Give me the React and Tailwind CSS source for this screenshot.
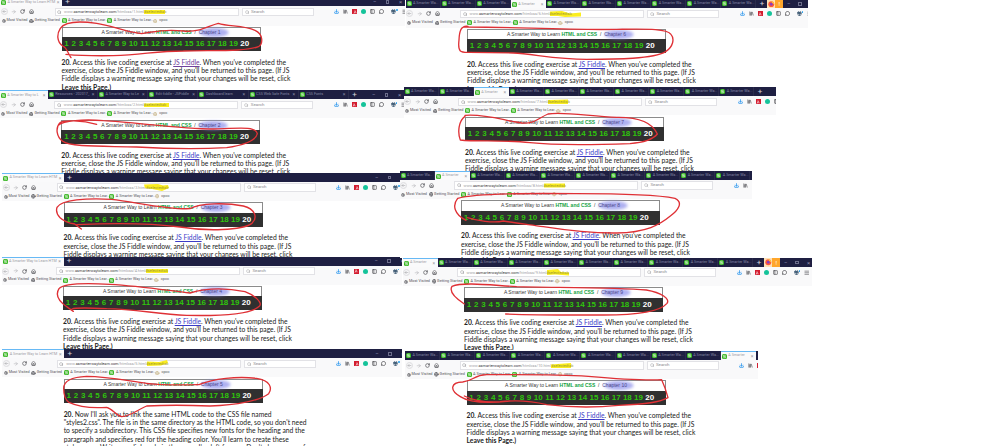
import React from "react";
import { ArrowLeft, ArrowRight, RotateCw, House, Search, Download, Library, PanelLeft, MessageCircle, Gift, Menu, Settings, Globe } from "lucide-react";

const DEFAULT_BODY = [
  "Access this live coding exercise at ",
  "exercise, close the JS Fiddle window, and you'll be returned to this page. (If JS",
  "Fiddle displays a warning message saying that your changes will be reset, click",
];

const STYLES_BODY = [
  "Now I'll ask you to link the same HTML code to the CSS file named",
  "\"styles2.css\". The file is in the same directory as the HTML code, so you don't need",
  "to specify a subdirectory. This CSS file specifies new fonts for the heading and the",
  "paragraph and specifies red for the heading color. You'll learn to create these",
  "styles soon. Write your link code in the space I've left for you. Don't change any of",
];

const many = (active) => ({ kind: "many", active });

// bottom: lower edge of the tab strip; end: lower edge of the visible window
const windows = [
  { n: 1, x: 0, bottom: 6.3, end: 92, w: 405, tabs: { kind: "single" }, visited: true },
  { n: 3, x: -0.2, bottom: 99.3, end: 173, w: 405, tabs: { kind: "mixed" }, chapter: 2 },
  { n: 5, x: 2, bottom: 182, end: 258, w: 399.5, tabs: { kind: "single" }, chapter: 3 },
  { n: 7, x: 1.5, bottom: 265.6, end: 350, w: 400, tabs: { kind: "single" }, chapter: 4 },
  { n: 9, x: 2.2, bottom: 358.3, end: 446, w: 400, tabs: { kind: "single" }, chapter: 5, body: STYLES_BODY },
  { n: 2, x: 405.5, bottom: 8.3, end: 88, w: 402, tabs: many(3), chapter: 6, extras: true },
  { n: 4, x: 403.5, bottom: 96.3, end: 171, w: 372, tabs: many(2), chapter: 7 },
  { n: 6, x: 399.5, bottom: 180, end: 258, w: 352.3, tabs: many(1), chapter: 8 },
  { n: 8, x: 402.5, bottom: 267, end: 350, w: 409, tabs: many(0), chapter: 9, extras: true },
  { n: 10, x: 405, bottom: 360, end: 446, w: 352.7, tabs: many(9), chapter: 10 },
];

// Highlighter swipe over the end of each address, by chapter
const swipes = {
  1: "M0 2H21V6H0Z",
  2: "M0 2.500L25 2V6H0Z",
  3: "M-2 .5L12 0L17 1.500L22 1L23 4L16 7L6 5L-1 4Z",
  4: "M0 2H22V6H0Z",
  5: "M1 1.500L13 2L21 0L22 3L15 5.500L1 6Z",
  6: "M0 1.500L12 1L20 3.500L31 2.500V6.500L15 7L8 6H0Z",
  7: "M0 2L20 1.500V6H0Z",
  8: "M0 1.500H21V5.500H0Z",
  9: "M0 1L11 0L14 3L22 3.500V6.500L8 5.500L0 6Z",
  10: "M0 2.500L20 1V6H0Z",
};

function Mark({ className = "" }) {
  return (
    <svg viewBox="0 0 10 10" className={"size-[5px] shrink-0 " + className}>
      <rect width="10" height="10" rx="3" fill="#35b51f" />
      <path d="M7.5 2.5H3.8Q2.3 2.5 2.3 3.8T3.8 5H6.2Q7.7 5 7.7 6.2T6.2 7.5H2.4" fill="none" stroke="#fff" strokeWidth="1.2" />
    </svg>
  );
}

function Tab({ width, label, active, close }) {
  return (
    <div
      style={{ width }}
      className={
        "flex h-full shrink-0 items-center gap-[1.5px] pl-[1px] pr-[2.5px] text-[3.7px] " +
        (active ? "border-t border-[#67b9f5] bg-[#fafafb] text-[#9b9ba3]" : "border-r border-[#2b2c4c] text-[#8587a3]")
      }
    >
      <Mark />
      <span className="flex-1">{label}</span>
      {close && <span className="text-[5px] leading-none">×</span>}
    </div>
  );
}

function TabStrip({ win }) {
  const { kind, active } = win.tabs;
  return (
    <div className="flex h-[9px] w-[420px] shrink-0 items-center bg-[#1e1f42] whitespace-nowrap text-[#a9aac0]">
      {kind === "single" && <Tab width={62} label="A Smarter Way to Learn HTM" active close />}
      {kind === "mixed" && (
        <>
          <Tab width={48} label="A Smarter Way to L" active close />
          {["Resources - 202017_", "A Smarter Way to Le", "Edit fiddle - JSFiddle", "Dashboard learn", "CSS Web Safe Fonts", "CSS Fonts"].map((t) => (
            <Tab key={t} width={50.2} label={t} close />
          ))}
        </>
      )}
      {kind === "many" &&
        Array.from({ length: 10 }, (_, i) => (
          <Tab key={i} width={35.1} label={i === active ? "A Smarter" : "A Smarter Wa..."} active={i === active} close={i === active} />
        ))}
      <span className="w-[11px] shrink-0 text-center text-[8px] leading-none text-white/80">+</span>
      {win.extras && (
        <div className="flex h-full items-center">
          <div className="flex h-full w-[8px] items-center justify-center bg-[#ffe1b5]">
            <svg viewBox="0 0 12 12" className="size-[6.5px]">
              <circle cx="6" cy="6" r="5.5" fill="#ff5a36" />
              <path d="M6 .5A5.5 5.5 0 0 1 11.5 6L8 4Z" fill="#ffc83d" />
              <circle cx="6" cy="6" r="2.6" fill="#8a3fc0" />
            </svg>
          </div>
          <div className="flex h-full w-[7.5px] items-center justify-center bg-[#ffa62b] text-[6px] leading-none text-white">!</div>
        </div>
      )}
      {kind === "single" && <div className="w-[300px]" />}
      <div className={"flex items-center text-[6px] leading-none text-[#8f90aa] " + (win.extras ? "gap-[8px] pl-[4px]" : kind === "single" ? "gap-[9.5px]" : "gap-[9.5px] pl-[12px]")}>
        <span>−</span>
        <span className="size-[3.5px] border border-[#6c6d8b]" />
        <span>×</span>
      </div>
    </div>
  );
}

function Toolbar({ n }) {
  return (
    <div className="flex h-[11px] w-[412px] shrink-0 items-center text-[#4a4a4f]">
      <div className="flex w-[54.5px] shrink-0 items-center pl-[0.5px]">
        <div className="flex size-[7px] items-center justify-center rounded-full border-[0.5px] border-[#dddde0]">
          <ArrowLeft size={5} color="#88888c" className="shrink-0" />
        </div>
        <ArrowRight size={5.5} color="#a5a5aa" className="ml-[3.5px]" />
        <RotateCw size={5} strokeWidth={3} className="ml-[3.5px]" />
        <House size={5} strokeWidth={3} className="ml-[4px]" />
      </div>
      <div className="flex h-[8.6px] w-[184px] shrink-0 items-center border-[0.5px] border-[#e2e2e6] bg-white pl-[1.5px] text-[3.85px] whitespace-nowrap text-[#a0a0a4]">
        <Search size={4.5} color="#77777c" className="mr-[2.5px]" />
        <span>www.</span>
        <span className="text-[#3b3b40]">asmarterwaytolearn.com</span>
        <span>/htmlcss/{n}.html</span>
        <span className="relative text-[#a09a30]">
          <svg className="absolute top-[-1px] left-0 h-[8px] w-[32px] overflow-visible" viewBox="0 0 32 8">
            <path d={swipes[n]} fill="#fbed1f" />
          </svg>
          <span className="relative">#selectedtab</span>
        </span>
      </div>
      <div className="ml-[3px] flex h-[8.6px] w-[72px] shrink-0 items-center gap-[2px] border-[0.5px] border-[#e2e2e6] bg-white pl-[2px] text-[4.4px] text-[#8b8b90]">
        <Search size={4.5} />
        Search
      </div>
      <div className="ml-[20.5px] flex items-center gap-[4px]">
        <Download size={5} strokeWidth={3.5} color="#2292ed" />
        <Library size={5} strokeWidth={3} />
        <div className="flex size-[5px] items-center justify-center bg-[#d31c2f]">
          <svg viewBox="0 0 10 10" className="size-[4px]">
            <path d="M2 8Q6 6 5 1.500Q5 5 8.500 7Q5 6 2 8" fill="none" stroke="#fff" strokeWidth="1.200" />
          </svg>
        </div>
        <div className="size-[5px] rounded-full bg-[#15c39a]" />
        <PanelLeft size={5} strokeWidth={3} />
        <MessageCircle size={5} strokeWidth={3.5} />
        <div className="flex items-start pl-[3px]">
          <Gift size={5} strokeWidth={3.5} color="#38566f" />
          <div className="size-[1.5px] rounded-full bg-[#1f9bea]" />
        </div>
        <Menu size={5.5} strokeWidth={2.5} />
      </div>
    </div>
  );
}

function Bookmarks() {
  return (
    <div className="flex h-[7px] w-[412px] shrink-0 items-center pl-[1.5px] text-[3.75px] whitespace-nowrap text-[#55555a]">
      <Settings size={4} strokeWidth={3.5} className="mr-[1px] shrink-0" />
      <span className="w-[22.5px] shrink-0">Most Visited</span>
      <Globe size={4.6} strokeWidth={3} className="mr-[1px] shrink-0" />
      <span className="w-[27px] shrink-0">Getting Started</span>
      <Mark className="mr-[1.5px]" />
      <span className="w-[39.2px] shrink-0">A Smarter Way to Lear...</span>
      <Mark className="mr-[1.5px]" />
      <span className="w-[39.2px] shrink-0">A Smarter Way to Lear...</span>
      <Globe size={4.4} color="#bda66c" className="mr-[2px] shrink-0" />
      <span>cpcc</span>
    </div>
  );
}

function ChapterBox({ chapter }) {
  return (
    <div className="w-[199px] shrink-0 font-['Liberation_Sans']">
      <div className="relative flex h-[10.3px] items-center justify-center border border-b-0 border-[#8b8b8b] bg-white text-[5px] whitespace-pre text-[#383838]">
        <svg className="absolute top-[-5px] left-[130px] h-[18px] w-[42px]" viewBox="0 0 42 18">
          <defs>
            <filter id={"haze" + chapter} x="-40%" y="-60%" width="180%" height="220%">
              <feGaussianBlur stdDeviation="1.8" />
            </filter>
          </defs>
          <ellipse cx="21" cy="9.500" rx="14.500" ry="4.500" fill="#8b8eea" opacity=".7" filter={"url(#haze" + chapter + ")"} />
        </svg>
        <span className="relative">
          A Smarter Way to Learn <b className="text-[#16a345]">HTML and CSS</b>
          {"  /  "}
          <span className="text-[#4e4a8c]">Chapter {chapter}</span>
        </span>
      </div>
      <div className="flex h-[14px] items-center bg-[#303030] pl-[1.5px] text-[8px] font-bold text-[#2fc40c]">
        {Array.from({ length: 20 }, (_, i) => (
          <span key={i} className={"shrink-0 text-center " + (i < 9 ? "w-[7.2px]" : "w-[11.15px]") + (i === 19 ? " text-white" : "")}>
            {i + 1}
          </span>
        ))}
      </div>
    </div>
  );
}

function Body({ win }) {
  const lines = win.body || DEFAULT_BODY;
  return (
    <div className="mt-[6.8px] font-[Lato] text-[6.75px] leading-[8.25px] whitespace-nowrap text-[#222]">
      {lines.map((line, i) => (
        <div key={i}>
          {i === 0 && <b>20. </b>}
          {line}
          {i === 0 && !win.body && (
            <>
              <span className={"underline " + (win.visited ? "text-[#70429c]" : "text-[#3c3cc7]")}>JS Fiddle</span>. When you've completed the
            </>
          )}
        </div>
      ))}
      {!win.body && <b>Leave this Page.)</b>}
    </div>
  );
}

function BrowserWindow({ win }) {
  const top = win.bottom - 9;
  return (
    <section
      className="absolute flex flex-col overflow-hidden bg-white"
      style={{ left: win.x, top, width: win.w, height: win.end - top }}
    >
      <TabStrip win={win} />
      <div className="flex h-[19.2px] w-full shrink-0 flex-col bg-[#f9f9fa]">
        <Toolbar n={win.chapter || 1} />
        <Bookmarks />
      </div>
      <div className="pt-[1.2px] pl-[61.5px]">
        <ChapterBox chapter={win.chapter || 1} />
        <Body win={win} />
      </div>
    </section>
  );
}

// Pen strokes, drawn at three times the page's scale
const strokes = [
  { x: 0, y: 0, d: "M213 173C200 155 203 144 188 138C170 125 170 102 181 85C194 65 240 63 290 70C335 76 375 96 425 101C465 94 500 88 550 93C600 98 625 77 655 70C685 80 730 76 765 91C790 102 789 130 777 139C740 156 630 150 550 153C470 153 430 164 340 167C290 168 240 167 198 163" },
  { x: 400, y: 0, d: "M204 79C183 76 178 93 177 120C173 155 180 158 208 157L340 159C400 162 470 178 560 178C650 178 760 177 797 155C820 140 824 116 813 103C800 85 740 87 650 88C500 91 330 80 190 81" },
  { x: 0, y: 88, d: "M290 109C245 96 190 96 180 104C165 120 170 147 188 160C210 178 320 174 410 177C500 182 600 183 680 179C730 171 768 157 772 137C768 114 720 120 640 123C540 123 400 102 310 98C250 93 190 98 175 112" },
  { x: 400, y: 84, d: "M195 97C176 110 172 145 181 168C230 174 310 167 390 176C470 185 600 182 690 179C735 175 760 165 772 150C757 115 715 99 650 100C575 98 490 82 444 90C415 102 405 120 365 117C315 111 260 89 195 94" },
  { x: 0, y: 170, d: "M244 177L224 162C185 155 164 135 171 112C184 90 260 83 335 88C410 97 510 120 570 116C600 98 680 98 730 108C765 117 774 142 756 160C725 182 620 184 540 171C450 159 335 159 230 164" },
  { x: 400, y: 168, d: "M198 157C163 140 156 112 173 91C230 75 400 76 530 77C650 77 770 80 825 91C851 103 835 127 810 145C780 170 740 193 650 195C570 196 500 187 430 176C380 169 340 164 310 159C280 166 230 158 202 149" },
  { x: 0, y: 255, d: "M220 169L203 157C177 140 165 120 177 101C192 83 260 84 330 88C420 93 500 106 570 114C620 99 680 99 735 110C762 120 790 143 778 154C750 181 650 183 560 181C470 177 405 162 320 161C260 158 225 158 216 162" },
  { x: 400, y: 255, d: "M193 147C170 132 146 110 156 94C190 80 275 91 350 95C450 98 650 97 739 105C785 113 811 132 801 145C780 170 710 180 610 180C500 180 420 181 317 177" },
  { x: 0, y: 346, d: "M191 127C191 107 211 93 260 91C325 91 390 106 440 112C500 119 560 117 597 116C640 98 710 90 770 97C812 103 817 127 806 143C780 164 710 177 630 180C560 177 495 177 440 180C415 190 390 211 365 212C345 207 338 188 320 184C280 187 235 182 207 169C192 160 191 141 191 127" },
  { x: 400, y: 346, d: "M330 165C275 171 214 174 181 152C148 133 151 109 188 108C220 105 221 87 260 86C390 85 480 85 565 91C680 101 760 102 785 101C793 118 799 136 804 155C780 169 740 174 655 178C570 187 500 183 440 176C400 166 360 161 300 167C260 169 220 164 193 150" },
];

export default function App() {
  return (
    <main className="relative h-[446px] w-[1000px] overflow-hidden bg-white font-[Roboto]">
      {windows.map((win) => (
        <BrowserWindow key={win.n} win={win} />
      ))}
      <svg className="pointer-events-none absolute inset-0" width="1000" height="446" viewBox="0 0 1000 446">
        {strokes.map((s, i) => (
          <path key={i} d={s.d} transform={`translate(${s.x} ${s.y}) scale(.33333)`} fill="none" stroke="#df3035" strokeWidth="4" strokeLinecap="round" strokeLinejoin="round" />
        ))}
      </svg>
    </main>
  );
}
